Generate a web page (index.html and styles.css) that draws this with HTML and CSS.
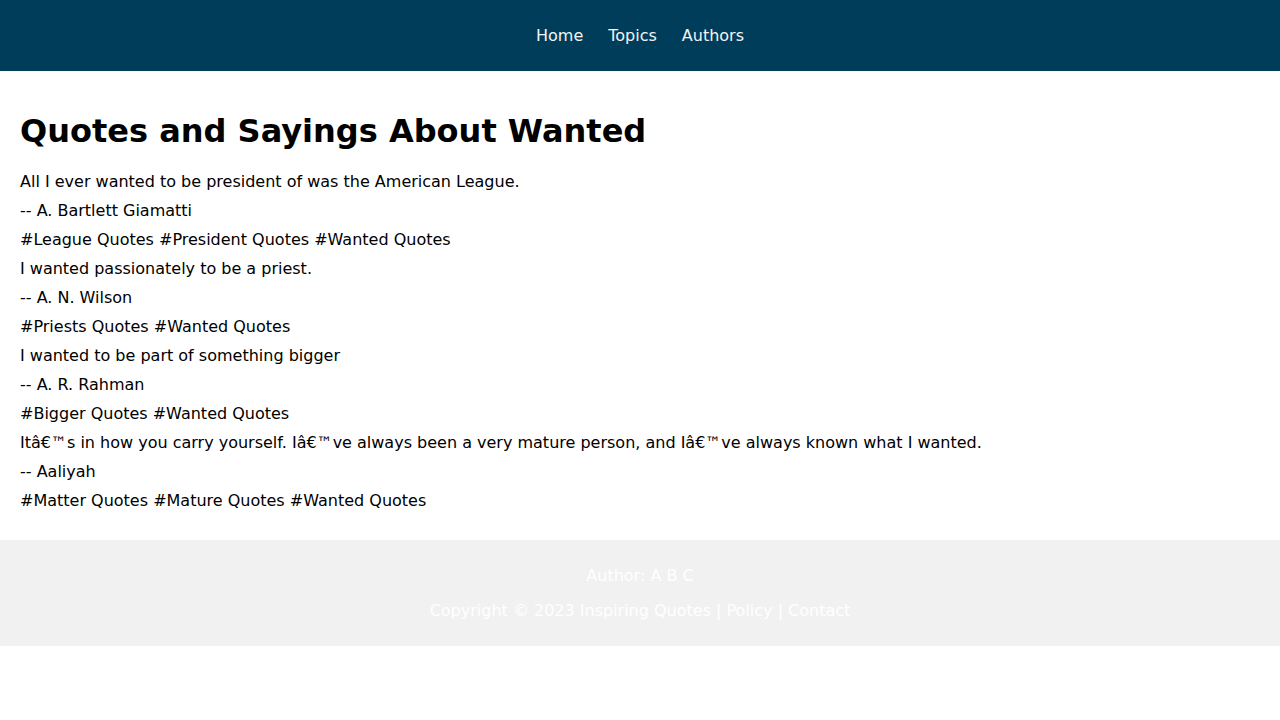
FILE: index.html
```html
<!DOCTYPE html>
<html lang="en">
<head>
<meta charset="utf-8">
<title>Quotes and Sayings About Wanted</title>
<link rel="stylesheet" href="styles.css">
</head>
<body>
<header class="site-header">
  <nav class="nav">
    <a href="#">Home</a>
    <a href="#">Topics</a>
    <a href="#">Authors</a>
  </nav>
</header>
<main class="content">
  <h1 class="title">Quotes and Sayings About Wanted</h1>
  <p>All I ever wanted to be president of was the American League.</p>
  <p>-- A. Bartlett Giamatti</p>
  <p>#League Quotes #President Quotes #Wanted Quotes</p>
  <p>I wanted passionately to be a priest.</p>
  <p>-- A. N. Wilson</p>
  <p>#Priests Quotes #Wanted Quotes</p>
  <p>I wanted to be part of something bigger</p>
  <p>-- A. R. Rahman</p>
  <p>#Bigger Quotes #Wanted Quotes</p>
  <p>Itâ€™s in how you carry yourself. Iâ€™ve always been a very mature person, and Iâ€™ve always known what I wanted.</p>
  <p>-- Aaliyah</p>
  <p>#Matter Quotes #Mature Quotes #Wanted Quotes</p>
</main>
<footer class="site-footer">
  <p>Author: A B C</p>
  <p>Copyright © 2023 Inspiring Quotes | Policy | Contact</p>
</footer>
</body>
</html>
```
FILE: styles.css
```css
html, body {
  margin: 0;
  padding: 0;
  background: #ffffff;
  font-family: "DejaVu Sans", sans-serif;
  font-size: 16px;
  color: #000000;
}

.site-header {
  background: #003d5b;
  height: 71px;
  display: flex;
  align-items: center;
  justify-content: center;
}

.nav {
  display: flex;
  gap: 25px;
}

.nav a {
  color: #f4f4f4;
  text-decoration: none;
  font-size: 16px;
}

.content {
  padding: 20px;
}

.title {
  font-size: 32px;
  font-weight: bold;
  margin: 21px 0 22px;
}

.content p {
  margin: 10px 0;
  line-height: 19px;
}

.site-footer {
  background: #f1f1f1;
  padding: 10px 20px;
  text-align: center;
  color: #ffffff;
}

.site-footer p {
  margin: 16px 0;
  line-height: 19px;
}
```
